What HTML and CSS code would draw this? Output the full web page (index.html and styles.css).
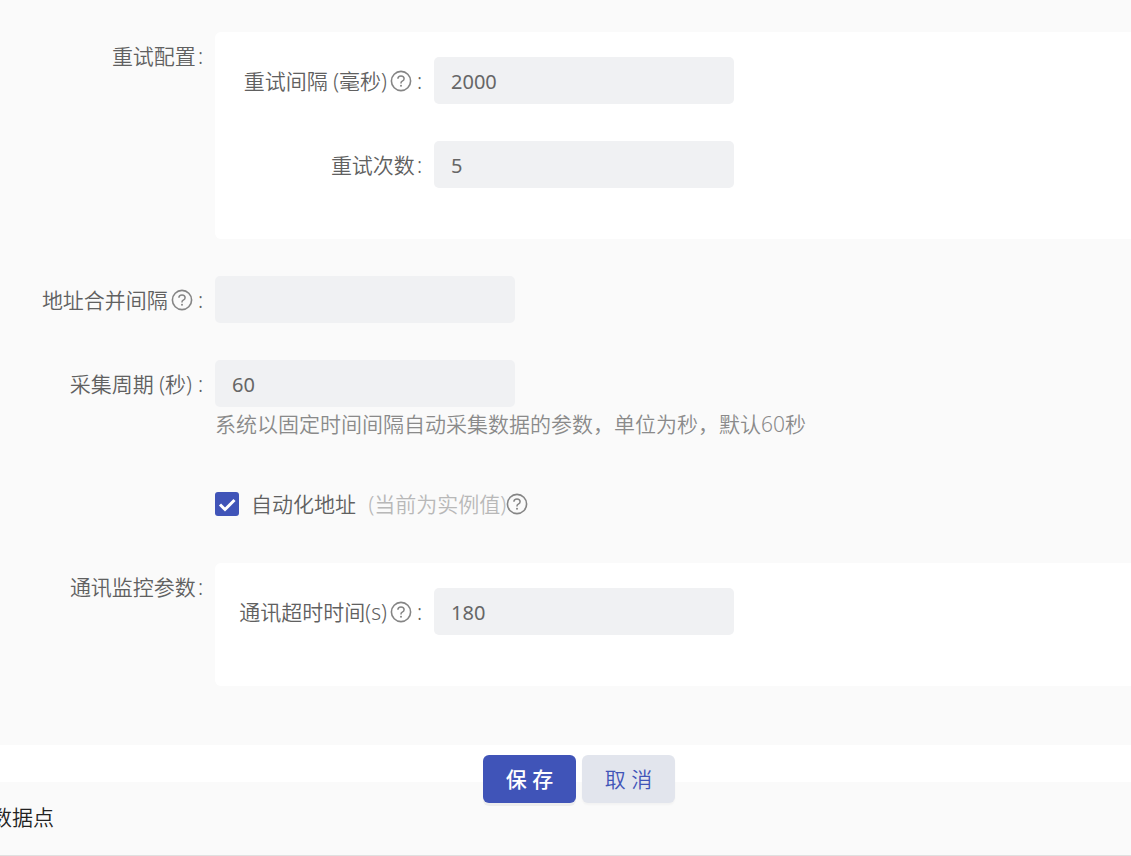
FILE: index.html
```html
<!DOCTYPE html>
<html lang="zh-CN">
<head>
<meta charset="utf-8">
<title>采集配置</title>
<link rel="stylesheet" href="styles.css">
</head>
<body>
<svg class="sprite" aria-hidden="true">
  <symbol id="help" viewBox="0 0 22 22">
    <circle cx="11" cy="11" r="9.6" fill="none" stroke="currentColor" stroke-width="1.6"/>
    <path d="M7.9 8.8C7.9 7 9.2 5.9 11 5.9s3.1 1.2 3.1 2.8c0 1.3-.8 2-1.8 2.5-.9.5-1.3.9-1.3 1.9v.5" fill="none" stroke="currentColor" stroke-width="1.5"/>
    <circle cx="11" cy="15.8" r="1" fill="currentColor"/>
  </symbol>
</svg>
<form class="form">
  <div class="row">
    <div class="label" id="retry-group">重试配置<span class="colon">:</span></div>
    <div class="panel" role="group" aria-labelledby="retry-group">
      <div class="row inner">
        <label class="label" for="retry-interval">重试间隔 (毫秒)<svg class="help"><use href="#help"/></svg><span class="colon">:</span></label>
        <input class="field" id="retry-interval" type="text" value="2000">
      </div>
      <div class="row inner">
        <label class="label" for="retry-count">重试次数<span class="colon">:</span></label>
        <input class="field" id="retry-count" type="text" value="5">
      </div>
    </div>
  </div>
  <div class="row">
    <label class="label" for="merge-gap">地址合并间隔<svg class="help"><use href="#help"/></svg><span class="colon">:</span></label>
    <input class="field" id="merge-gap" type="text">
  </div>
  <div class="row">
    <label class="label" for="period"><span class="spaced">采集周期 (秒)</span><span class="colon">:</span></label>
    <div class="control">
      <input class="field" id="period" type="text" value="60">
      <div class="hint">系统以固定时间间隔自动采集数据的参数，单位为秒，默认60秒</div>
    </div>
  </div>
  <div class="check-row">
    <input class="check" id="auto-address" type="checkbox" checked>
    <label class="check-label" for="auto-address">自动化地址 <span class="muted">(当前为实例值)</span></label>
    <svg class="help"><use href="#help"/></svg>
  </div>
  <div class="row">
    <div class="label" id="monitor-group">通讯监控参数<span class="colon">:</span></div>
    <div class="panel" role="group" aria-labelledby="monitor-group">
      <div class="row inner">
        <label class="label" for="timeout">通讯超时时间(s)<svg class="help"><use href="#help"/></svg><span class="colon">:</span></label>
        <input class="field" id="timeout" type="text" value="180">
      </div>
    </div>
  </div>
</form>
<div class="actions">
  <button class="btn primary" type="button">保 存</button>
  <button class="btn" type="button">取 消</button>
</div>
<section class="points">
  <h2 class="points-title">数据点</h2>
</section>
</body>
</html>
```
FILE: styles.css
```css
* {
  box-sizing: border-box;
}

body {
  margin: 0;
  background: #fff;
  color: #606060;
  font: 350 21px/32px "Noto Sans", "Noto Sans CJK SC", sans-serif;
  overflow-x: hidden;
}

.sprite {
  position: absolute;
  width: 0;
  height: 0;
}

.form {
  display: flex;
  flex-direction: column;
  gap: 37px;
  padding: 32px 0 59px;
  background: #fafafa;
}

.row {
  display: flex;
  align-items: flex-start;
}

.label {
  display: flex;
  flex: none;
  justify-content: flex-end;
  align-items: center;
  width: 215px;
  height: 47px;
  padding-right: 12px;
  white-space: nowrap;
}

.inner .label {
  width: 219px;
}

.colon {
  margin-left: 2px;
}

.spaced {
  margin-right: 4px;
}

.help {
  flex: none;
  width: 22px;
  height: 22px;
  margin: 0 3px;
  color: #858585;
}

.panel {
  display: flex;
  flex: 1;
  flex-direction: column;
  gap: 37px;
  padding: 25px 0 51px;
  border-radius: 6px 0 0 6px;
  background: #fff;
}

.inner {
  height: 47px;
}

.field {
  display: block;
  width: 300px;
  height: 47px;
  padding: 1px 17px 0;
  border: 0;
  border-radius: 5px;
  background: #f0f1f3;
  color: #666;
  font: inherit;
  font-size: 20px;
  font-weight: 400;
}

.hint {
  height: 38px;
  line-height: 34px;
  color: #8a8a8a;
}

.check-row {
  display: flex;
  align-items: center;
  height: 44px;
  padding-left: 215px;
}

.check {
  appearance: none;
  width: 24px;
  height: 24px;
  margin: 0 12px 0 0;
  border-radius: 3px;
  background: #4054b8 url("data:image/svg+xml,%3Csvg xmlns='http://www.w3.org/2000/svg' viewBox='0 0 24 24'%3E%3Cpath d='M5 12.5l5 5L19.5 8' fill='none' stroke='white' stroke-width='3'/%3E%3C/svg%3E");
}

.muted {
  margin-left: 7px;
  color: #b8b8b8;
}

.check-row .help {
  margin: 0;
}

.actions {
  position: relative;
  display: flex;
  justify-content: center;
  align-items: flex-start;
  gap: 6px;
  height: 37px;
  padding: 10px 0 0 27px;
}

.btn {
  flex: none;
  width: 93px;
  height: 48px;
  padding: 0;
  border: 0;
  border-radius: 6px;
  background: #e2e5ed;
  box-shadow: 0 2px 2px rgba(0, 0, 0, 0.03);
  color: #4054b8;
  font: inherit;
}

.primary {
  background: #4054b8;
  box-shadow: 0 3px 0 rgba(0, 0, 0, 0.05);
  color: #fff;
  font-weight: 500;
}

.points {
  padding: 19px 0;
  border-bottom: 1px solid #e0e0e0;
  background: #fafafa;
}

.points-title {
  margin: 0 0 3px -9px;
  color: #222;
  font-size: 21px;
  font-weight: 350;
}
```
